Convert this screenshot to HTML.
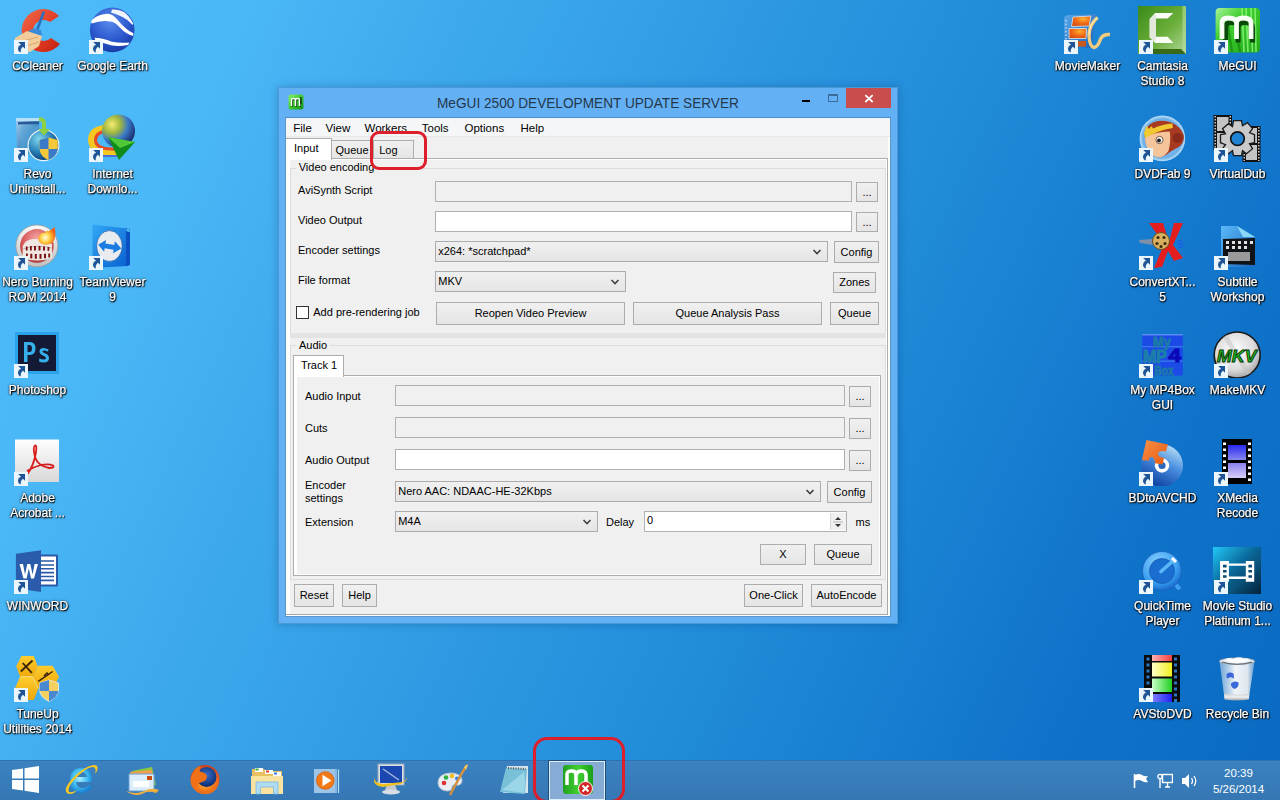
<!DOCTYPE html><html><head><meta charset="utf-8"><style>
html,body{margin:0;padding:0;}
body{width:1280px;height:800px;overflow:hidden;position:relative;font-family:"Liberation Sans",sans-serif;
background:linear-gradient(115deg,#4dbbf9 0%,#4ab7f6 15%,#3ca8ec 30%,#1f8ad8 63%,#0f72c9 85%,#0a6ac2 100%);}
.t{position:absolute;white-space:nowrap;}
.r{position:absolute;}
.lbl{position:absolute;width:75px;text-align:center;color:#fff;font-size:12px;line-height:15px;text-shadow:0 0 1px #000,0 1px 2px #000,1px 1px 1px #000,0 0 3px rgba(0,0,0,.5);will-change:transform;-webkit-text-stroke:0.25px #fff;}
</style></head><body>

<div class="r" style="left:278px;top:87px;width:620px;height:537px;background:#64b0f5;border:1px solid #4a98d8;box-sizing:border-box;box-shadow:0 0 8px rgba(0,30,80,0.25);"></div>
<svg class="r" style="left:288px;top:94px" width="16" height="16" viewBox="0 0 16 16"><defs><linearGradient id="tig" x1="0" y1="0" x2="1" y2="1"><stop offset="0" stop-color="#8af070"/><stop offset="0.5" stop-color="#3cc830"/><stop offset="1" stop-color="#1a9018"/></linearGradient></defs><rect x="0.5" y="0.5" width="15" height="15" rx="2.5" fill="url(#tig)"/><path d="M3.5 12 V6 Q3.5 4.5 5.5 4.5 Q7.5 4.5 7.5 6 V12 M7.5 6 Q7.5 4.5 9.5 4.5 Q11.5 4.5 11.5 6 V12" stroke="#0a3a0a" stroke-width="1.6" fill="none" transform="translate(0.8,0.8)"/><path d="M3.5 12 V6 Q3.5 4.5 5.5 4.5 Q7.5 4.5 7.5 6 V12 M7.5 6 Q7.5 4.5 9.5 4.5 Q11.5 4.5 11.5 6 V12" stroke="#f4fff0" stroke-width="1.5" fill="none"/><path d="M13 3 V10" stroke="#0a3a0a" stroke-width="1.3"/></svg>
<div class="t" style="left:436.6px;top:93.60px;font-size:15px;line-height:18px;color:#24384a;transform:scaleX(0.91);transform-origin:0 0;">MeGUI 2500 DEVELOPMENT UPDATE SERVER</div>
<div class="r" style="left:802px;top:100px;width:8px;height:2px;background:#000;"></div>
<div class="r" style="left:828px;top:94px;width:10px;height:8px;border:1px solid #3a6c9c;border-top-width:2px;box-sizing:border-box;"></div>
<div class="r" style="left:846px;top:88px;width:45px;height:20px;background:#c94d4d;"></div>
<svg class="r" style="left:861px;top:90px" width="16" height="16"><path d="M4.3 5.2 L11.7 12 M11.7 5.2 L4.3 12" stroke="#fff" stroke-width="1.7"/></svg>
<div class="r" style="left:285px;top:117px;width:606px;height:500px;background:#f0f0f0;border:1px solid #5f96c8;box-sizing:border-box;"></div>
<div class="r" style="left:286px;top:117px;width:605px;height:1px;background:#4a90d0;"></div>
<div class="r" style="left:286px;top:118px;width:604px;height:1px;background:#e6f5fc;"></div>
<div class="r" style="left:286px;top:119px;width:604px;height:17px;background:#f5f6f7;"></div>
<div class="r" style="left:286px;top:136px;width:604px;height:1px;background:#e8e8e8;"></div>
<div class="t" style="left:293.25px;top:121.02px;font-size:11.5px;line-height:14px;color:#000;">File</div>
<div class="t" style="left:325.5px;top:121.02px;font-size:11.5px;line-height:14px;color:#000;">View</div>
<div class="t" style="left:364.5px;top:121.02px;font-size:11.5px;line-height:14px;color:#000;">Workers</div>
<div class="t" style="left:421.75px;top:121.02px;font-size:11.5px;line-height:14px;color:#000;">Tools</div>
<div class="t" style="left:464.5px;top:121.02px;font-size:11.5px;line-height:14px;color:#000;">Options</div>
<div class="t" style="left:520.5px;top:121.02px;font-size:11.5px;line-height:14px;color:#000;">Help</div>
<div class="r" style="left:286px;top:158px;width:602px;height:423px;border:1px solid #adadad;border-left:none;border-bottom:none;box-sizing:border-box;background:#f0f0f0;"></div>
<div class="r" style="left:286px;top:159px;width:601px;height:421px;border:1px solid #fff;border-left-width:4px;box-sizing:border-box;"></div>
<div class="r" style="left:331px;top:140px;width:43px;height:19px;border:1px solid #adadad;box-sizing:border-box;background:linear-gradient(#f0f0f0,#e5e5e5);"></div>
<div class="r" style="left:373px;top:140px;width:41px;height:19px;border:1px solid #adadad;box-sizing:border-box;background:linear-gradient(#f0f0f0,#e5e5e5);"></div>
<div class="r" style="left:286px;top:138px;width:46px;height:22px;border:1px solid #adadad;border-left:none;border-bottom:none;box-sizing:border-box;background:#fff;"></div>
<div class="t" style="left:294px;top:141.69px;font-size:11px;line-height:13px;color:#000;">Input</div>
<div class="t" style="left:335.5px;top:143.94px;font-size:11px;line-height:13px;color:#000;">Queue</div>
<div class="t" style="left:379.25px;top:143.69px;font-size:11px;line-height:13px;color:#000;">Log</div>
<div class="r" style="left:290px;top:168px;width:596px;height:166px;border:1px solid #dcdcdc;box-sizing:border-box;"></div>
<div class="r" style="left:296px;top:162px;width:76px;height:10px;background:#f0f0f0;"></div>
<div class="t" style="left:298.7px;top:160.89px;font-size:11px;line-height:13px;color:#000;">Video encoding</div>
<div class="t" style="left:298px;top:184.19px;font-size:11px;line-height:13px;color:#000;">AviSynth Script</div>
<div class="t" style="left:298px;top:214.19px;font-size:11px;line-height:13px;color:#000;">Video Output</div>
<div class="t" style="left:298px;top:244.19px;font-size:11px;line-height:13px;color:#000;">Encoder settings</div>
<div class="t" style="left:298px;top:274.19px;font-size:11px;line-height:13px;color:#000;">File format</div>
<div class="r" style="left:435px;top:181px;width:417px;height:21px;border:1px solid #b0b0b0;box-sizing:border-box;background:#f0f0f0;"></div>
<div class="r" style="left:856px;top:182px;width:22px;height:20px;border:1px solid #acacac;box-sizing:border-box;background:linear-gradient(#f0f0f0,#e5e5e5);"></div>
<div class="t" style="left:856px;top:185.70px;width:22px;text-align:center;font-size:11px;line-height:13px;color:#000">...</div>
<div class="r" style="left:435px;top:211px;width:417px;height:21px;border:1px solid #b0b0b0;box-sizing:border-box;background:#fff;"></div>
<div class="r" style="left:856px;top:212px;width:22px;height:20px;border:1px solid #acacac;box-sizing:border-box;background:linear-gradient(#f0f0f0,#e5e5e5);"></div>
<div class="t" style="left:856px;top:215.70px;width:22px;text-align:center;font-size:11px;line-height:13px;color:#000">...</div>
<div class="r" style="left:435px;top:241px;width:393px;height:21px;border:1px solid #acacac;box-sizing:border-box;background:linear-gradient(#f0f0f0,#e5e5e5);"></div>
<div class="t" style="left:438.25px;top:245.19px;font-size:11px;line-height:13px;color:#000;">x264: *scratchpad*</div>
<svg class="r" style="left:812px;top:247.5px" width="10" height="8"><path d="M1.5 2 L5 5.5 L8.5 2" stroke="#404040" stroke-width="1.6" fill="none"/></svg>
<div class="r" style="left:834px;top:241px;width:45px;height:22px;border:1px solid #acacac;box-sizing:border-box;background:linear-gradient(#f0f0f0,#e5e5e5);"></div>
<div class="t" style="left:834px;top:245.70px;width:45px;text-align:center;font-size:11px;line-height:13px;color:#000">Config</div>
<div class="r" style="left:435px;top:271px;width:191px;height:21px;border:1px solid #acacac;box-sizing:border-box;background:linear-gradient(#f0f0f0,#e5e5e5);"></div>
<div class="t" style="left:438.25px;top:275.19px;font-size:11px;line-height:13px;color:#000;">MKV</div>
<svg class="r" style="left:610px;top:277.5px" width="10" height="8"><path d="M1.5 2 L5 5.5 L8.5 2" stroke="#404040" stroke-width="1.6" fill="none"/></svg>
<div class="r" style="left:833px;top:272px;width:43px;height:21px;border:1px solid #acacac;box-sizing:border-box;background:linear-gradient(#f0f0f0,#e5e5e5);"></div>
<div class="t" style="left:833px;top:276.20px;width:43px;text-align:center;font-size:11px;line-height:13px;color:#000">Zones</div>
<div class="r" style="left:296px;top:306px;width:13px;height:13px;border:1px solid #333;background:#fff;box-sizing:border-box;"></div>
<div class="t" style="left:313.25px;top:305.69px;font-size:11px;line-height:13px;color:#000;">Add pre-rendering job</div>
<div class="r" style="left:436px;top:302px;width:189px;height:23px;border:1px solid #acacac;box-sizing:border-box;background:linear-gradient(#f0f0f0,#e5e5e5);"></div>
<div class="t" style="left:436px;top:307.20px;width:189px;text-align:center;font-size:11px;line-height:13px;color:#000">Reopen Video Preview</div>
<div class="r" style="left:633px;top:302px;width:189px;height:23px;border:1px solid #acacac;box-sizing:border-box;background:linear-gradient(#f0f0f0,#e5e5e5);"></div>
<div class="t" style="left:633px;top:307.20px;width:189px;text-align:center;font-size:11px;line-height:13px;color:#000">Queue Analysis Pass</div>
<div class="r" style="left:830px;top:302px;width:49px;height:23px;border:1px solid #acacac;box-sizing:border-box;background:linear-gradient(#f0f0f0,#e5e5e5);"></div>
<div class="t" style="left:830px;top:307.20px;width:49px;text-align:center;font-size:11px;line-height:13px;color:#000">Queue</div>
<div class="r" style="left:290px;top:333px;width:596px;height:5px;background:#e3e3e3;"></div>
<div class="r" style="left:290px;top:345px;width:596px;height:235px;border:1px solid #dcdcdc;box-sizing:border-box;"></div>
<div class="r" style="left:296px;top:340px;width:34px;height:10px;background:#f0f0f0;"></div>
<div class="t" style="left:299px;top:339.19px;font-size:11px;line-height:13px;color:#000;">Audio</div>
<div class="r" style="left:293px;top:375px;width:588px;height:201px;border:1px solid #adadad;box-sizing:border-box;background:#f0f0f0;"></div>
<div class="r" style="left:294px;top:376px;width:586px;height:199px;border:1px solid #fff;border-left-width:3px;box-sizing:border-box;"></div>
<div class="r" style="left:293px;top:355px;width:51px;height:22px;border:1px solid #adadad;border-bottom:none;box-sizing:border-box;background:#fff;"></div>
<div class="t" style="left:300.9px;top:359.09px;font-size:11px;line-height:13px;color:#000;">Track 1</div>
<div class="t" style="left:305px;top:389.69px;font-size:11px;line-height:13px;color:#000;">Audio Input</div>
<div class="t" style="left:305px;top:421.69px;font-size:11px;line-height:13px;color:#000;">Cuts</div>
<div class="t" style="left:305px;top:453.69px;font-size:11px;line-height:13px;color:#000;">Audio Output</div>
<div class="r" style="left:395px;top:385px;width:450px;height:21px;border:1px solid #b0b0b0;box-sizing:border-box;background:#f0f0f0;"></div>
<div class="r" style="left:849px;top:386px;width:22px;height:21px;border:1px solid #acacac;box-sizing:border-box;background:linear-gradient(#f0f0f0,#e5e5e5);"></div>
<div class="t" style="left:849px;top:390.20px;width:22px;text-align:center;font-size:11px;line-height:13px;color:#000">...</div>
<div class="r" style="left:395px;top:417px;width:450px;height:21px;border:1px solid #b0b0b0;box-sizing:border-box;background:#f0f0f0;"></div>
<div class="r" style="left:849px;top:418px;width:22px;height:21px;border:1px solid #acacac;box-sizing:border-box;background:linear-gradient(#f0f0f0,#e5e5e5);"></div>
<div class="t" style="left:849px;top:422.20px;width:22px;text-align:center;font-size:11px;line-height:13px;color:#000">...</div>
<div class="r" style="left:395px;top:449px;width:450px;height:21px;border:1px solid #b0b0b0;box-sizing:border-box;background:#fff;"></div>
<div class="r" style="left:849px;top:450px;width:22px;height:21px;border:1px solid #acacac;box-sizing:border-box;background:linear-gradient(#f0f0f0,#e5e5e5);"></div>
<div class="t" style="left:849px;top:454.20px;width:22px;text-align:center;font-size:11px;line-height:13px;color:#000">...</div>
<div class="t" style="left:305px;top:479.19px;font-size:11px;line-height:13px;color:#000;">Encoder</div>
<div class="t" style="left:305px;top:492.19px;font-size:11px;line-height:13px;color:#000;">settings</div>
<div class="r" style="left:395px;top:481px;width:426px;height:21px;border:1px solid #acacac;box-sizing:border-box;background:linear-gradient(#f0f0f0,#e5e5e5);"></div>
<div class="t" style="left:398.2px;top:485.19px;font-size:11px;line-height:13px;color:#000;">Nero AAC: NDAAC-HE-32Kbps</div>
<svg class="r" style="left:805px;top:487.5px" width="10" height="8"><path d="M1.5 2 L5 5.5 L8.5 2" stroke="#404040" stroke-width="1.6" fill="none"/></svg>
<div class="r" style="left:827px;top:481px;width:45px;height:22px;border:1px solid #acacac;box-sizing:border-box;background:linear-gradient(#f0f0f0,#e5e5e5);"></div>
<div class="t" style="left:827px;top:485.70px;width:45px;text-align:center;font-size:11px;line-height:13px;color:#000">Config</div>
<div class="t" style="left:305px;top:516.19px;font-size:11px;line-height:13px;color:#000;">Extension</div>
<div class="r" style="left:395px;top:511px;width:203px;height:21px;border:1px solid #acacac;box-sizing:border-box;background:linear-gradient(#f0f0f0,#e5e5e5);"></div>
<div class="t" style="left:398.2px;top:515.19px;font-size:11px;line-height:13px;color:#000;">M4A</div>
<svg class="r" style="left:582px;top:517.5px" width="10" height="8"><path d="M1.5 2 L5 5.5 L8.5 2" stroke="#404040" stroke-width="1.6" fill="none"/></svg>
<div class="t" style="left:606px;top:516.19px;font-size:11px;line-height:13px;color:#000;">Delay</div>
<div class="r" style="left:644px;top:511px;width:203px;height:21px;border:1px solid #b0b0b0;box-sizing:border-box;background:#fff;"></div>
<div class="t" style="left:647px;top:513.69px;font-size:11px;line-height:13px;color:#000;">0</div>
<div class="r" style="left:830px;top:513px;width:15px;height:17px;background:#f0f0f0;border-left:1px solid #d8d8d8;"></div>
<svg class="r" style="left:832px;top:514px" width="12" height="16"><path d="M3 6 L6 3 L9 6Z M3 10 L6 13 L9 10Z" fill="#333"/><path d="M1 8 H11" stroke="#b8b8b8" stroke-width="1"/></svg>
<div class="t" style="left:855.5px;top:516.19px;font-size:11px;line-height:13px;color:#000;">ms</div>
<div class="r" style="left:760px;top:544px;width:46px;height:21px;border:1px solid #acacac;box-sizing:border-box;background:linear-gradient(#f0f0f0,#e5e5e5);"></div>
<div class="t" style="left:760px;top:548.20px;width:46px;text-align:center;font-size:11px;line-height:13px;color:#000">X</div>
<div class="r" style="left:814px;top:544px;width:58px;height:21px;border:1px solid #acacac;box-sizing:border-box;background:linear-gradient(#f0f0f0,#e5e5e5);"></div>
<div class="t" style="left:814px;top:548.20px;width:58px;text-align:center;font-size:11px;line-height:13px;color:#000">Queue</div>
<div class="r" style="left:286px;top:580px;width:4px;height:35px;background:#fff;"></div>
<div class="r" style="left:887px;top:580px;width:1px;height:35px;background:#a8a8a8;"></div>
<div class="r" style="left:888px;top:137px;width:2px;height:479px;background:#fff;"></div>
<div class="r" style="left:286px;top:614px;width:602px;height:1px;background:#a8a8a8;"></div>
<div class="r" style="left:286px;top:615px;width:604px;height:1px;background:#fff;"></div>
<div class="r" style="left:294px;top:584px;width:40px;height:23px;border:1px solid #acacac;box-sizing:border-box;background:linear-gradient(#f0f0f0,#e5e5e5);"></div>
<div class="t" style="left:294px;top:589.20px;width:40px;text-align:center;font-size:11px;line-height:13px;color:#000">Reset</div>
<div class="r" style="left:342px;top:584px;width:35px;height:23px;border:1px solid #acacac;box-sizing:border-box;background:linear-gradient(#f0f0f0,#e5e5e5);"></div>
<div class="t" style="left:342px;top:589.20px;width:35px;text-align:center;font-size:11px;line-height:13px;color:#000">Help</div>
<div class="r" style="left:744px;top:584px;width:59px;height:23px;border:1px solid #acacac;box-sizing:border-box;background:linear-gradient(#f0f0f0,#e5e5e5);"></div>
<div class="t" style="left:744px;top:589.20px;width:59px;text-align:center;font-size:11px;line-height:13px;color:#000">One-Click</div>
<div class="r" style="left:811px;top:584px;width:71px;height:23px;border:1px solid #acacac;box-sizing:border-box;background:linear-gradient(#f0f0f0,#e5e5e5);"></div>
<div class="t" style="left:811px;top:589.20px;width:71px;text-align:center;font-size:11px;line-height:13px;color:#000">AutoEncode</div>
<div class="r" style="left:370px;top:131px;width:51px;height:33px;border:3px solid #dc1f2b;border-radius:9px;"></div>
<svg class="r" style="left:13px;top:6px" width="48" height="48" viewBox="0 0 48 48">
<defs><linearGradient id="ccR" x1="0" y1="0" x2="1" y2="1"><stop offset="0" stop-color="#f06a4a"/><stop offset="0.6" stop-color="#e03a22"/><stop offset="1" stop-color="#c02010"/></linearGradient></defs>
<path d="M46 10 A21.5 21.5 0 1 0 47 38 L38 32 A10.5 10.5 0 1 1 37 16 Z" fill="url(#ccR)"/>
<path d="M30.5 6.5 L24.5 23" stroke="#2a70c0" stroke-width="2.6" stroke-linecap="round"/>
<path d="M15 26 Q20 20 28 24 L29 30 Z" fill="#3a8ad8"/>
<path d="M14 25 L29 30 L26 40 L17 46 Q8 44 4 38 Q1 34 2 32 Z" fill="#f2cc9a"/>
<path d="M6 36 L25 31 M10 41 L26 36" stroke="#d8a870" stroke-width="1"/>
</svg>
<svg class="r" style="left:14px;top:40px" width="14" height="14" viewBox="0 0 14 14"><rect x="0" y="0" width="14" height="14" fill="#eaf6fc"/><path d="M4.2 2 L11 2 L11 8.8 L8.9 6.7 Q6.2 8.8 6.8 12.6 Q4 11.6 4 8.6 Q4.2 5.6 7 4.8 Z" fill="#1f5596"/></svg>
<div class="lbl" style="left:0.0px;top:59.3px">CCleaner</div>
<svg class="r" style="left:88px;top:6px" width="48" height="48" viewBox="0 0 48 48">
<defs><radialGradient id="geG" cx="0.45" cy="0.3" r="0.75"><stop offset="0" stop-color="#5a8aee"/><stop offset="0.6" stop-color="#2a56cc"/><stop offset="1" stop-color="#1838a0"/></radialGradient></defs>
<circle cx="24.2" cy="23.9" r="22.3" fill="url(#geG)"/>
<path d="M3.2 14.9 Q8 8.5 19.5 7.75 Q25 8 29.2 13.6 Q34 19.5 38.3 22.7 Q41.5 25.5 45.5 27.3 L45 30 Q38 28 31.8 21.4 Q27 16 22.7 15.5 Q14 13.6 3.5 17.5 Z" fill="#fff"/>
<path d="M24 3.6 Q31 3 36 6 Q41 9.5 45.2 17.5 L44.5 19 Q40 13.5 34.4 11 Q29 8 23 6.5 Z" fill="#f0f4fc"/>
<path d="M6.5 31.8 Q14 32 24 35.7 Q33 37.5 41.5 36.4 L40 39 Q32 40.5 24 39.6 Q15 37 7.5 34.5 Z" fill="#fff"/>
</svg>
<svg class="r" style="left:89px;top:40px" width="14" height="14" viewBox="0 0 14 14"><rect x="0" y="0" width="14" height="14" fill="#eaf6fc"/><path d="M4.2 2 L11 2 L11 8.8 L8.9 6.7 Q6.2 8.8 6.8 12.6 Q4 11.6 4 8.6 Q4.2 5.6 7 4.8 Z" fill="#1f5596"/></svg>
<div class="lbl" style="left:75.0px;top:59.3px">Google Earth</div>
<svg class="r" style="left:13px;top:114px" width="48" height="48" viewBox="0 0 48 48">
<defs><linearGradient id="rvB" x1="0" y1="0" x2="1" y2="1"><stop offset="0" stop-color="#a8d0f0"/><stop offset="0.5" stop-color="#4a90c8"/><stop offset="1" stop-color="#1a70a8"/></linearGradient>
<radialGradient id="rvG" cx="0.35" cy="0.3" r="0.75"><stop offset="0" stop-color="#80d8f0"/><stop offset="0.55" stop-color="#2a80b8"/><stop offset="1" stop-color="#0a3a70"/></radialGradient></defs>
<path d="M3 4 L26 4 L27 40 L4 40 Z" fill="url(#rvB)"/>
<path d="M3 4 L26 4 L26 7 L3 7Z" fill="#b8e0f8"/>
<path d="M5 8 L26 7.5 L26 10 L5 10.5Z" fill="#2a5a98"/>
<path d="M8 12 L26 11.5 L26 40 L8 40Z" fill="#5aa8d8" opacity="0.5"/>
<circle cx="30.5" cy="31.2" r="15.4" fill="url(#rvG)" stroke="#e8f2f8" stroke-width="1.2"/>
<path d="M26.6 26 L35.5 23.4 L44.8 26 L44.8 35 Q43.5 43 35.5 46 Q27.5 43 26.6 35 Z" fill="#f4c838"/>
<path d="M26.6 26 L35.5 23.4 L35.5 35 L26.6 35 Z M35.5 35 L44.8 35 Q43.5 43 35.5 46 Z" fill="#3a7ac8"/>
<path d="M26 3 Q33 3 33 10 L33 15 L37 15 L31 21.5 L25 15 L29 15 L29 10 Q29 7 26 7 Z" fill="#8ed040"/>
</svg>
<svg class="r" style="left:14px;top:148px" width="14" height="14" viewBox="0 0 14 14"><rect x="0" y="0" width="14" height="14" fill="#eaf6fc"/><path d="M4.2 2 L11 2 L11 8.8 L8.9 6.7 Q6.2 8.8 6.8 12.6 Q4 11.6 4 8.6 Q4.2 5.6 7 4.8 Z" fill="#1f5596"/></svg>
<div class="lbl" style="left:0.0px;top:167.3px">Revo</div>
<div class="lbl" style="left:0.0px;top:182.3px">Uninstall...</div>
<svg class="r" style="left:88px;top:114px" width="48" height="48" viewBox="0 0 48 48">
<defs><radialGradient id="idG" cx="0.3" cy="0.3" r="0.75"><stop offset="0" stop-color="#f4ec70"/><stop offset="0.35" stop-color="#a0b840"/><stop offset="0.65" stop-color="#3a78c8"/><stop offset="1" stop-color="#1a3070"/></radialGradient></defs>
<path d="M16 11 Q0 13 0 26 Q1 39 16 41 L30 41 L30 37 L17 36 Q6 34 6 26 Q7 17 17 16 Z" fill="#f4c820"/>
<path d="M16 13.5 Q2.5 15.5 2.5 26 Q3.5 37 16 38.5 L30 39 L30 37 L17 36 Q6 34 6 26 Q7 17 17 16 Z" fill="#f4c820"/>
<path d="M17 16 Q6 17 6 26 Q6 34 17 36 L30 37 L30 34 L17 33 Q9 31 9 26 Q10 19 18 19 Z" fill="#e84a22"/>
<path d="M17 19 Q9 20 9 26 Q9 31 17 33 L30 34 L30 32 L17 31 Q11 30 11 26 Q12 21 18 21 Z" fill="none"/>
<path d="M4 33 Q8 40 16 41 L30 41 L30 43 L15 43 Q6 41 4 33Z" fill="#4a70d8"/>
<circle cx="30.5" cy="17" r="16.5" fill="url(#idG)"/>
<path d="M20 23 L47 28 L31 46 Z" fill="#108a18"/>
<path d="M20 23 L47 28 L32 34 Z" fill="#50c838"/>
</svg>
<svg class="r" style="left:89px;top:148px" width="14" height="14" viewBox="0 0 14 14"><rect x="0" y="0" width="14" height="14" fill="#eaf6fc"/><path d="M4.2 2 L11 2 L11 8.8 L8.9 6.7 Q6.2 8.8 6.8 12.6 Q4 11.6 4 8.6 Q4.2 5.6 7 4.8 Z" fill="#1f5596"/></svg>
<div class="lbl" style="left:75.0px;top:167.3px">Internet</div>
<div class="lbl" style="left:75.0px;top:182.3px">Downlo...</div>
<svg class="r" style="left:13px;top:222px" width="48" height="48" viewBox="0 0 48 48">
<defs><radialGradient id="neG" cx="0.5" cy="0.3" r="0.7"><stop offset="0" stop-color="#f4a8a8"/><stop offset="0.6" stop-color="#d85a5a"/><stop offset="1" stop-color="#b03838"/></radialGradient>
<linearGradient id="neS" x1="0" y1="0" x2="0" y2="1"><stop offset="0" stop-color="#f8f8f8"/><stop offset="1" stop-color="#c0c0c0"/></linearGradient>
<radialGradient id="neF" cx="0.4" cy="0.6" r="0.6"><stop offset="0" stop-color="#fffce0"/><stop offset="0.45" stop-color="#ffd040"/><stop offset="1" stop-color="#f06010"/></radialGradient></defs>
<circle cx="23.9" cy="23.9" r="21" fill="url(#neS)" stroke="#9a9a9a" stroke-width="0.8"/>
<circle cx="23.9" cy="23.9" r="16.8" fill="url(#neG)"/>
<path d="M9.7 24 Q12 18 20 17 Q30 17 39 22 L39 36 Q24 41 9.7 36 Z" fill="#f0e6e2"/>
<path d="M10 27 Q24 22 39 26" stroke="#b8a8a8" stroke-width="0.8" fill="none"/>
<path d="M12.8 24.5h1.8v4h-1.8zM17 24h1.8v4.5h-1.8zM21 24h2v4.5h-2zM25.5 24h2v4.5h-2zM30 24.5h2v4h-2zM34.5 25h1.8v3.8h-1.8zM13 31.5h1.8v4.5h-1.8zM17.3 31.8h2v4.8h-2zM21.8 32h2v4.8h-2zM26.5 32h2v4.8h-2zM31 31.8h2v4.5h-2zM35.3 31.5h1.8v4h-1.8z" fill="#7a1010"/>
<path d="M41.5 5 Q44 14 40 20 Q36 24 29 22 Q24 19 26 14 Q28 10 32 11 Q33 8 36 9 Q38 8 41.5 5Z" fill="url(#neF)"/>
</svg>
<svg class="r" style="left:14px;top:256px" width="14" height="14" viewBox="0 0 14 14"><rect x="0" y="0" width="14" height="14" fill="#eaf6fc"/><path d="M4.2 2 L11 2 L11 8.8 L8.9 6.7 Q6.2 8.8 6.8 12.6 Q4 11.6 4 8.6 Q4.2 5.6 7 4.8 Z" fill="#1f5596"/></svg>
<div class="lbl" style="left:0.0px;top:275.3px">Nero Burning</div>
<div class="lbl" style="left:0.0px;top:290.3px">ROM 2014</div>
<svg class="r" style="left:88px;top:222px" width="48" height="48" viewBox="0 0 48 48">
<defs><linearGradient id="tvB" x1="0" y1="0" x2="1" y2="1"><stop offset="0" stop-color="#30a8f4"/><stop offset="1" stop-color="#0a60d0"/></linearGradient></defs>
<path d="M4.5 2.5 L39.5 6.5 L39.5 44 L4.5 46 Z" fill="url(#tvB)"/>
<path d="M38 6.3 L42 8 L42 43 L38 44.2Z" fill="#0a50c0"/>
<path d="M38.5 7 L41.5 8.3 L41.5 10 L38.5 9Z" fill="#60e0f8"/>
<ellipse cx="21.4" cy="24" rx="12.8" ry="15.4" fill="#e8ecf0" stroke="#0a4a9a" stroke-width="0.6"/>
<g transform="rotate(9 21.8 24.6)"><path d="M10 24.6 L17 18.6 L17 22.2 L26 22.2 L26 18.6 L33.5 24.6 L26 30.6 L26 27 L17 27 L17 30.6 Z" fill="#1a7ce0"/></g>
</svg>
<svg class="r" style="left:89px;top:256px" width="14" height="14" viewBox="0 0 14 14"><rect x="0" y="0" width="14" height="14" fill="#eaf6fc"/><path d="M4.2 2 L11 2 L11 8.8 L8.9 6.7 Q6.2 8.8 6.8 12.6 Q4 11.6 4 8.6 Q4.2 5.6 7 4.8 Z" fill="#1f5596"/></svg>
<div class="lbl" style="left:75.0px;top:275.3px">TeamViewer</div>
<div class="lbl" style="left:75.0px;top:290.3px">9</div>
<svg class="r" style="left:13px;top:330px" width="48" height="48" viewBox="0 0 48 48">
<rect x="2" y="2" width="44" height="42" fill="#2aa2ea"/>
<rect x="5" y="5" width="38" height="36" fill="#141a35"/>
<path d="M11 12 L11 32 L14.5 32 L14.5 25 L17 25 Q22.5 25 22.5 18.5 Q22.5 12 17 12 Z M14.5 15 L16.5 15 Q19 15 19 18.5 Q19 22 16.5 22 L14.5 22 Z" fill="#36b0ea" fill-rule="evenodd"/>
<path d="M35.5 19.5 Q33 18 30.5 18 Q26.5 18 26.5 21.5 Q26.5 24 30 25.5 Q33 26.5 33 28 Q33 29.5 30.5 29.5 Q28 29.5 26.5 28.3 L26 31.5 Q28 32.5 30.5 32.5 Q36 32.5 36 28 Q36 25 32.5 23.5 Q29.5 22.5 29.5 21.3 Q29.5 20.5 31 20.5 Q33 20.5 35 21.8 Z" fill="#36b0ea"/>
</svg>
<svg class="r" style="left:14px;top:364px" width="14" height="14" viewBox="0 0 14 14"><rect x="0" y="0" width="14" height="14" fill="#eaf6fc"/><path d="M4.2 2 L11 2 L11 8.8 L8.9 6.7 Q6.2 8.8 6.8 12.6 Q4 11.6 4 8.6 Q4.2 5.6 7 4.8 Z" fill="#1f5596"/></svg>
<div class="lbl" style="left:0.0px;top:383.3px">Photoshop</div>
<svg class="r" style="left:13px;top:438px" width="48" height="48" viewBox="0 0 48 48">
<defs><linearGradient id="acB" x1="0" y1="0" x2="0" y2="1"><stop offset="0" stop-color="#ffffff"/><stop offset="1" stop-color="#d8d8d8"/></linearGradient></defs>
<rect x="2" y="1.5" width="44" height="42.5" fill="url(#acB)"/>
<path d="M14.5 36 Q21 27 23 14 Q24 7 22 7.5 Q19.5 9 22 19 Q25 28 36 30 Q42 30 40 27.5 Q36 25.5 28 27 Q20 29 14 33" stroke="#d81c1c" stroke-width="1.8" fill="none"/>
</svg>
<svg class="r" style="left:14px;top:472px" width="14" height="14" viewBox="0 0 14 14"><rect x="0" y="0" width="14" height="14" fill="#eaf6fc"/><path d="M4.2 2 L11 2 L11 8.8 L8.9 6.7 Q6.2 8.8 6.8 12.6 Q4 11.6 4 8.6 Q4.2 5.6 7 4.8 Z" fill="#1f5596"/></svg>
<div class="lbl" style="left:0.0px;top:491.3px">Adobe</div>
<div class="lbl" style="left:0.0px;top:506.3px">Acrobat ...</div>
<svg class="r" style="left:13px;top:546px" width="48" height="48" viewBox="0 0 48 48">
<rect x="24" y="8.5" width="21" height="32" rx="1" fill="#2b5aa8"/>
<rect x="26" y="10.5" width="17" height="28" fill="#fff"/>
<path d="M26 15h15M26 19h15M26 22.8h15M26 26.6h15M26 30.5h15M26 34.4h15" stroke="#2b5aa8" stroke-width="1.6"/>
<path d="M2.9 7.8 L28 4.2 L28 46 L2.9 42.2 Z" fill="#2b5cab"/>
<path d="M6.5 18 L10 18 L12 28.5 L14.3 18 L17.3 18 L19.6 28.5 L21.6 18 L25 18 L21 32.5 L18 32.5 L15.8 22.5 L13.6 32.5 L10.5 32.5 Z" fill="#fff"/>
</svg>
<svg class="r" style="left:14px;top:580px" width="14" height="14" viewBox="0 0 14 14"><rect x="0" y="0" width="14" height="14" fill="#eaf6fc"/><path d="M4.2 2 L11 2 L11 8.8 L8.9 6.7 Q6.2 8.8 6.8 12.6 Q4 11.6 4 8.6 Q4.2 5.6 7 4.8 Z" fill="#1f5596"/></svg>
<div class="lbl" style="left:0.0px;top:599.3px">WINWORD</div>
<svg class="r" style="left:13px;top:654px" width="48" height="48" viewBox="0 0 48 48">
<defs><linearGradient id="tuY" x1="0" y1="0" x2="0" y2="1"><stop offset="0" stop-color="#ffcc30"/><stop offset="1" stop-color="#f0a808"/></linearGradient></defs>
<path d="M8.4 1.9 L20.8 1.9 L24.7 12.3 L19.5 22.7 L7.1 22.7 L3.2 12.3 Z" fill="url(#tuY)"/>
<path d="M25 11.7 L39.6 11.7 L46 22.7 L40 34.4 L25.3 34.4 L19.5 22.7 Z" fill="url(#tuY)"/>
<path d="M7 22.7 L19.5 22.7 L25.3 34.4 L20.8 46 L7 46 L1.9 34.4 Z" fill="url(#tuY)"/>
<path d="M19.5 22.7 L25.3 34.4 M7.1 22.7 L19.5 22.7" stroke="#ffe890" stroke-width="0.8"/>
<path d="M7.8 17.5 L19.5 6.5 M9.7 9 L18.8 18.8" stroke="#3a2408" stroke-width="1.8"/>
<path d="M25.3 27.3 L39.6 17.5 M31 22 L34 19 L36 21" stroke="#3a2408" stroke-width="1.5" fill="none"/>
<path d="M26.6 29 L36 26 L45.5 29 L45.5 37 Q44 44 36 47.4 Q28 44 26.6 37Z" fill="#f4d060" stroke="#e8f0f8" stroke-width="0.8"/>
<path d="M26.6 29 L36 26 L36 37 L26.6 37Z M36 37 L45.5 37 Q44 44 36 47.4Z" fill="#4a88d0"/>
</svg>
<svg class="r" style="left:14px;top:688px" width="14" height="14" viewBox="0 0 14 14"><rect x="0" y="0" width="14" height="14" fill="#eaf6fc"/><path d="M4.2 2 L11 2 L11 8.8 L8.9 6.7 Q6.2 8.8 6.8 12.6 Q4 11.6 4 8.6 Q4.2 5.6 7 4.8 Z" fill="#1f5596"/></svg>
<div class="lbl" style="left:0.0px;top:707.3px">TuneUp</div>
<div class="lbl" style="left:0.0px;top:722.3px">Utilities 2014</div>
<svg class="r" style="left:1063px;top:6px" width="48" height="48" viewBox="0 0 48 48">
<defs><linearGradient id="mmB" x1="0" y1="0" x2="1" y2="1"><stop offset="0" stop-color="#5aa8e8"/><stop offset="1" stop-color="#1a60b8"/></linearGradient>
<radialGradient id="mmO" cx="0.6" cy="0.3" r="0.8"><stop offset="0" stop-color="#ffb030"/><stop offset="0.5" stop-color="#f06a18"/><stop offset="1" stop-color="#d04a10"/></radialGradient></defs>
<path d="M1 12 Q2 9 6 9 L34 8 Q30 25 29 42 L5 41 Q1 40 1 37 Z" fill="url(#mmB)"/>
<path d="M3 14v24" stroke="#a8d8f8" stroke-width="1.6" stroke-dasharray="1.6 2"/>
<path d="M10 11 L28 10 L26 20 L8.5 20.5 Z" fill="url(#mmO)" stroke="#d8ecf8" stroke-width="0.8"/>
<path d="M6 22.5 L23.5 22.5 L23 32.5 L6 32.5 Z" fill="url(#mmO)" stroke="#d8ecf8" stroke-width="0.8"/>
<path d="M15 35 L23 35 L23 40.5 L15 40.5 Z" fill="#c85a20"/>
<path d="M34.5 11.5 Q26 19 26 29 Q26.5 41 31 41.5 Q35 41 37.5 33 Q40 28 47 28.5" stroke="#f4cc80" stroke-width="3.4" fill="none"/>
<path d="M34.5 11.5 Q26 19 26 29" stroke="#fff0c0" stroke-width="1" fill="none"/>
</svg>
<svg class="r" style="left:1064px;top:40px" width="14" height="14" viewBox="0 0 14 14"><rect x="0" y="0" width="14" height="14" fill="#eaf6fc"/><path d="M4.2 2 L11 2 L11 8.8 L8.9 6.7 Q6.2 8.8 6.8 12.6 Q4 11.6 4 8.6 Q4.2 5.6 7 4.8 Z" fill="#1f5596"/></svg>
<div class="lbl" style="left:1050.0px;top:59.3px">MovieMaker</div>
<svg class="r" style="left:1138px;top:6px" width="48" height="48" viewBox="0 0 48 48">
<defs><linearGradient id="caG" x1="0" y1="0" x2="1" y2="1"><stop offset="0" stop-color="#3a8a1a"/><stop offset="0.55" stop-color="#6aae3a"/><stop offset="1" stop-color="#b0d898"/></linearGradient></defs>
<rect x="0" y="0" width="48" height="48" fill="url(#caG)"/>
<path d="M14.5 43 L43 43 L48 48 L14.5 48Z" fill="#3a6a18"/>
<path d="M44.5 0 L48 0 L48 48 L44.5 43Z" fill="#b8dca0" opacity="0.6"/>
<path d="M17.2 7 L35.4 7 L29.6 12.6 L17.9 12.6 L17.9 30.8 L29.6 30.8 L35.4 37 L17.2 37 L11.7 31.2 L11.7 13 Z" fill="#fafcf6"/>
<path d="M17.2 7 L17.9 12.6 L17.9 30.8 L17.2 37 L11.7 31.2 L11.7 13 Z" fill="#e2e8dc"/>
</svg>
<svg class="r" style="left:1139px;top:40px" width="14" height="14" viewBox="0 0 14 14"><rect x="0" y="0" width="14" height="14" fill="#eaf6fc"/><path d="M4.2 2 L11 2 L11 8.8 L8.9 6.7 Q6.2 8.8 6.8 12.6 Q4 11.6 4 8.6 Q4.2 5.6 7 4.8 Z" fill="#1f5596"/></svg>
<div class="lbl" style="left:1125.0px;top:59.3px">Camtasia</div>
<div class="lbl" style="left:1125.0px;top:74.3px">Studio 8</div>
<svg class="r" style="left:1213px;top:6px" width="48" height="48" viewBox="0 0 48 48">
<defs><linearGradient id="mgG" x1="0" y1="0" x2="1" y2="1"><stop offset="0" stop-color="#a8f498"/><stop offset="0.35" stop-color="#40d030"/><stop offset="1" stop-color="#20a818"/></linearGradient></defs>
<rect x="2.6" y="1.9" width="44.4" height="44.5" rx="4" fill="url(#mgG)"/>
<path d="M29 2 L31 46 M33 2 L35 46 M38 2 L39.5 46 M42 2 L43 46" stroke="#90f880" stroke-width="1.6" opacity="0.8"/>
<path d="M15 20 L19 46 M22 20 L27 46" stroke="#1a8a10" stroke-width="2.5" opacity="0.7"/>
<path d="M11 35 L11 20 Q11 15 16.5 15 Q23.5 15 23.5 20 L23.5 35 M23.5 20 Q23.5 15 30 15 Q38 15 38 20 L38 35" stroke="#0a4a08" stroke-width="5" fill="none" transform="translate(1.6,1.6)"/>
<path d="M9 33 L9 17 Q9 12 15 12 Q23.5 12 23.5 17 L23.5 33 M23.5 17 Q23.5 12 30 12 Q38 12 38 17 L38 33" stroke="#f8fff4" stroke-width="4.8" fill="none"/>
</svg>
<svg class="r" style="left:1214px;top:40px" width="14" height="14" viewBox="0 0 14 14"><rect x="0" y="0" width="14" height="14" fill="#eaf6fc"/><path d="M4.2 2 L11 2 L11 8.8 L8.9 6.7 Q6.2 8.8 6.8 12.6 Q4 11.6 4 8.6 Q4.2 5.6 7 4.8 Z" fill="#1f5596"/></svg>
<div class="lbl" style="left:1200.0px;top:59.3px">MeGUI</div>
<svg class="r" style="left:1138px;top:114px" width="48" height="48" viewBox="0 0 48 48">
<defs><radialGradient id="dfG" cx="0.5" cy="0.5" r="0.5"><stop offset="0" stop-color="#b0dcf8"/><stop offset="0.85" stop-color="#6ab0e8"/><stop offset="1" stop-color="#bfe0f8"/></radialGradient></defs>
<circle cx="24.4" cy="24.4" r="22.8" fill="url(#dfG)"/>
<path d="M6.5 19.5 Q10 8 20 7 Q30 6 38 11 Q46 17 46 24 Q45 32 37 35 L32 38 Q28 42 22 43.5 Q14 42 11 37 Q7 30 6.5 19.5Z" fill="#a83a22"/>
<path d="M7 23 Q16 18 31.8 17.5 Q33 28 30.5 37 Q27 42 22 43.5 Q15 43 11 37 Q7 31 7 23Z" fill="#f4c49a"/>
<path d="M6 19 L8.5 11.5 L11 15 L13.5 12 L15 14.5 Q25 10 34.4 9.5 L34.8 14 Q22 15.5 7 24 Z" fill="#f0c830"/>
<circle cx="21.5" cy="26" r="3.6" fill="#fff" stroke="#5a3a2a" stroke-width="0.8"/><circle cx="21" cy="26.5" r="2" fill="#222"/>
<circle cx="39.5" cy="24" r="5" fill="#8a2a18"/>
</svg>
<svg class="r" style="left:1139px;top:148px" width="14" height="14" viewBox="0 0 14 14"><rect x="0" y="0" width="14" height="14" fill="#eaf6fc"/><path d="M4.2 2 L11 2 L11 8.8 L8.9 6.7 Q6.2 8.8 6.8 12.6 Q4 11.6 4 8.6 Q4.2 5.6 7 4.8 Z" fill="#1f5596"/></svg>
<div class="lbl" style="left:1125.0px;top:167.3px">DVDFab 9</div>
<svg class="r" style="left:1213px;top:114px" width="48" height="48" viewBox="0 0 48 48">
<rect x="0.5" y="1" width="18.5" height="35" fill="#111"/>
<rect x="4" y="3" width="11.5" height="14" fill="#c4c4c4"/><rect x="4" y="19" width="11.5" height="15" fill="#c4c4c4"/>
<rect x="29.5" y="12" width="18" height="36" fill="#111"/>
<rect x="33" y="14" width="11" height="15" fill="#c4c4c4"/><rect x="33" y="31" width="11" height="15" fill="#c4c4c4"/>
<path d="M2.2 2v33M17.3 2v33M31.2 13v34M45.8 13v34" stroke="#e8e8e8" stroke-width="1.3" stroke-dasharray="1.5 1.5"/>
<g transform="translate(24.5,24.7)"><path d="M-4 -18 h8 l1 5 l5 -3 l5 6 l-3 4 l5 2 v8 l-5 1 l3 5 l-6 5 l-4 -3 l-1 5 h-8 l-1 -5 l-4 3 l-6 -5 l3 -4 l-5 -2 v-8 l5 -1 l-3 -5 l6 -5 l4 3 Z" fill="#cacaca" stroke="#1a1a1a" stroke-width="1.3"/><circle r="6.8" fill="#1f82d2" stroke="#111" stroke-width="1.6"/></g>
</svg>
<svg class="r" style="left:1214px;top:148px" width="14" height="14" viewBox="0 0 14 14"><rect x="0" y="0" width="14" height="14" fill="#eaf6fc"/><path d="M4.2 2 L11 2 L11 8.8 L8.9 6.7 Q6.2 8.8 6.8 12.6 Q4 11.6 4 8.6 Q4.2 5.6 7 4.8 Z" fill="#1f5596"/></svg>
<div class="lbl" style="left:1200.0px;top:167.3px">VirtualDub</div>
<svg class="r" style="left:1138px;top:222px" width="48" height="48" viewBox="0 0 48 48">
<path d="M11 1 L25 1 L31 20 L36 1 L45 1 L35 23 L45 36 L36 39 L30 29 L24 45 L16 46 L26 22 Z" fill="#e41e1e"/>
<path d="M1 18 L14 17 L15 23 L2 21Z" fill="#8090a8"/>
<circle cx="23" cy="19" r="8.5" fill="#d8b060" stroke="#6a5020" stroke-width="1"/>
<circle cx="20" cy="15.5" r="1.6" fill="#3a2a0a"/><circle cx="26" cy="15.5" r="1.6" fill="#3a2a0a"/><circle cx="19" cy="21.5" r="1.6" fill="#3a2a0a"/><circle cx="27" cy="21.5" r="1.6" fill="#3a2a0a"/><circle cx="23" cy="24.5" r="1.6" fill="#3a2a0a"/>
<text x="39.5" y="26" font-family="Liberation Sans" font-size="11" fill="#1a5af0">5</text>
</svg>
<svg class="r" style="left:1139px;top:256px" width="14" height="14" viewBox="0 0 14 14"><rect x="0" y="0" width="14" height="14" fill="#eaf6fc"/><path d="M4.2 2 L11 2 L11 8.8 L8.9 6.7 Q6.2 8.8 6.8 12.6 Q4 11.6 4 8.6 Q4.2 5.6 7 4.8 Z" fill="#1f5596"/></svg>
<div class="lbl" style="left:1125.0px;top:275.3px">ConvertXT...</div>
<div class="lbl" style="left:1125.0px;top:290.3px">5</div>
<svg class="r" style="left:1213px;top:222px" width="48" height="48" viewBox="0 0 48 48">
<defs><linearGradient id="swB" x1="0" y1="0" x2="1" y2="1"><stop offset="0" stop-color="#5ab8f8"/><stop offset="1" stop-color="#1a68c0"/></linearGradient></defs>
<path d="M8 4 L24 4 L42 15 L42 45 L8 45 Z" fill="url(#swB)"/>
<path d="M24 4 L42 15 L30 15Z" fill="#8ad8f8"/>
<path d="M10 17 L42 16 L42 43 L10 42 Z" fill="#101418"/>
<path d="M13 19h3v3h-3zM19 19h3v3h-3zM25 19h3v3h-3zM31 19h3v3h-3zM37 19h3v3h-3zM13 24h3v3h-3zM19 24h3v3h-3zM25 24h3v3h-3zM31 24h3v3h-3z" fill="#e0e0e0"/>
<rect x="15" y="30" width="22" height="9" fill="#9a9a9a"/>
</svg>
<svg class="r" style="left:1214px;top:256px" width="14" height="14" viewBox="0 0 14 14"><rect x="0" y="0" width="14" height="14" fill="#eaf6fc"/><path d="M4.2 2 L11 2 L11 8.8 L8.9 6.7 Q6.2 8.8 6.8 12.6 Q4 11.6 4 8.6 Q4.2 5.6 7 4.8 Z" fill="#1f5596"/></svg>
<div class="lbl" style="left:1200.0px;top:275.3px">Subtitle</div>
<div class="lbl" style="left:1200.0px;top:290.3px">Workshop</div>
<svg class="r" style="left:1138px;top:330px" width="48" height="48" viewBox="0 0 48 48">
<rect x="4.2" y="4.2" width="40.6" height="41.3" fill="#1c4ae6"/>
<rect x="4.2" y="4.2" width="40.6" height="1.2" fill="#6a9af4"/>
<rect x="4.2" y="16" width="40.6" height="1.3" fill="#3a7ae8"/>
<rect x="4.2" y="30.5" width="40.6" height="1.3" fill="#3a7ae8"/>
<text x="15" y="17" font-family="Liberation Sans" font-size="15" font-weight="bold" fill="#1a7aa8" stroke="#1a7aa8" stroke-width="0.9" textLength="18" lengthAdjust="spacingAndGlyphs">My</text>
<text x="5" y="32.5" font-family="Liberation Sans" font-size="18" font-weight="bold" fill="#1a80a8" stroke="#1a80a8" stroke-width="1" textLength="24" lengthAdjust="spacingAndGlyphs">MP</text>
<text x="30.5" y="32" font-family="Liberation Sans" font-size="18" font-weight="bold" fill="#0a08b8" stroke="#0a08b8" stroke-width="1" textLength="12.5" lengthAdjust="spacingAndGlyphs">4</text>
<text x="16.5" y="45" font-family="Liberation Sans" font-size="13" font-weight="bold" fill="#1a7aa8" stroke="#1a7aa8" stroke-width="0.9" textLength="19" lengthAdjust="spacingAndGlyphs">Box</text>
</svg>
<svg class="r" style="left:1139px;top:364px" width="14" height="14" viewBox="0 0 14 14"><rect x="0" y="0" width="14" height="14" fill="#eaf6fc"/><path d="M4.2 2 L11 2 L11 8.8 L8.9 6.7 Q6.2 8.8 6.8 12.6 Q4 11.6 4 8.6 Q4.2 5.6 7 4.8 Z" fill="#1f5596"/></svg>
<div class="lbl" style="left:1125.0px;top:383.3px">My MP4Box</div>
<div class="lbl" style="left:1125.0px;top:398.3px">GUI</div>
<svg class="r" style="left:1213px;top:330px" width="48" height="48" viewBox="0 0 48 48">
<defs><radialGradient id="mkG" cx="0.45" cy="0.4" r="0.6"><stop offset="0" stop-color="#ffffff"/><stop offset="0.7" stop-color="#dcdcdc"/><stop offset="1" stop-color="#a8a8a8"/></radialGradient></defs>
<circle cx="24.2" cy="25" r="23" fill="url(#mkG)" stroke="#1a1a1a" stroke-width="1.6"/>
<path d="M24 25 L12 6 M24 25 L36 44" stroke="#c4c4c4" stroke-width="5" opacity="0.5"/>
<text x="4" y="31.5" font-family="Liberation Sans" font-size="16" font-weight="bold" font-style="italic" fill="#20c020" stroke="#0a3a0a" stroke-width="0.9" textLength="39.5" lengthAdjust="spacingAndGlyphs">MKV</text>
</svg>
<svg class="r" style="left:1214px;top:364px" width="14" height="14" viewBox="0 0 14 14"><rect x="0" y="0" width="14" height="14" fill="#eaf6fc"/><path d="M4.2 2 L11 2 L11 8.8 L8.9 6.7 Q6.2 8.8 6.8 12.6 Q4 11.6 4 8.6 Q4.2 5.6 7 4.8 Z" fill="#1f5596"/></svg>
<div class="lbl" style="left:1200.0px;top:383.3px">MakeMKV</div>
<svg class="r" style="left:1138px;top:438px" width="48" height="48" viewBox="0 0 48 48">
<defs><linearGradient id="bdG" x1="0.8" y1="0" x2="0.3" y2="1"><stop offset="0" stop-color="#c0e4f8"/><stop offset="0.45" stop-color="#4a90e0"/><stop offset="1" stop-color="#0a3ea0"/></linearGradient>
<linearGradient id="bdO" x1="0" y1="0" x2="1" y2="1"><stop offset="0" stop-color="#f89048"/><stop offset="1" stop-color="#e85a10"/></linearGradient></defs>
<circle cx="24" cy="27.5" r="21" fill="url(#bdG)"/>
<circle cx="24" cy="27.5" r="7.2" fill="#fff"/><circle cx="24" cy="27.5" r="3.6" fill="#2a68c0"/>
<path d="M8.4 1.9 L29.9 6.5 L27.9 13.6 Q22 12 20 15 Q19.5 19 26 20 L24.6 26.6 L16.9 25.3 Q17 20 14 19 Q10.5 19 11 22.7 L3.9 22 Z" fill="url(#bdO)"/>
</svg>
<svg class="r" style="left:1139px;top:472px" width="14" height="14" viewBox="0 0 14 14"><rect x="0" y="0" width="14" height="14" fill="#eaf6fc"/><path d="M4.2 2 L11 2 L11 8.8 L8.9 6.7 Q6.2 8.8 6.8 12.6 Q4 11.6 4 8.6 Q4.2 5.6 7 4.8 Z" fill="#1f5596"/></svg>
<div class="lbl" style="left:1125.0px;top:491.3px">BDtoAVCHD</div>
<svg class="r" style="left:1213px;top:438px" width="48" height="48" viewBox="0 0 48 48">
<defs><linearGradient id="xmA" x1="0" y1="0" x2="0" y2="1"><stop offset="0" stop-color="#2828f0"/><stop offset="1" stop-color="#8888f0"/></linearGradient>
<linearGradient id="xmB" x1="0" y1="0" x2="0" y2="1"><stop offset="0" stop-color="#8a80f0"/><stop offset="1" stop-color="#d8d0f8"/></linearGradient></defs>
<rect x="9" y="1" width="30" height="45" fill="#000"/>
<rect x="15" y="7" width="18" height="15" fill="url(#xmA)"/>
<rect x="15" y="25" width="18" height="15" fill="url(#xmB)"/>
<path d="M10 4.5h3v2.6h-3zM10 10.5h3v2.6h-3zM10 16.5h3v2.6h-3zM10 22.5h3v2.6h-3zM10 28.5h3v2.6h-3zM10 34.5h3v2.6h-3zM10 40.5h3v2.6h-3zM35 4.5h3v2.6h-3zM35 10.5h3v2.6h-3zM35 16.5h3v2.6h-3zM35 22.5h3v2.6h-3zM35 28.5h3v2.6h-3zM35 34.5h3v2.6h-3zM35 40.5h3v2.6h-3z" fill="#fff"/>
</svg>
<svg class="r" style="left:1214px;top:472px" width="14" height="14" viewBox="0 0 14 14"><rect x="0" y="0" width="14" height="14" fill="#eaf6fc"/><path d="M4.2 2 L11 2 L11 8.8 L8.9 6.7 Q6.2 8.8 6.8 12.6 Q4 11.6 4 8.6 Q4.2 5.6 7 4.8 Z" fill="#1f5596"/></svg>
<div class="lbl" style="left:1200.0px;top:491.3px">XMedia</div>
<div class="lbl" style="left:1200.0px;top:506.3px">Recode</div>
<svg class="r" style="left:1138px;top:546px" width="48" height="48" viewBox="0 0 48 48">
<defs><radialGradient id="qtG" cx="0.4" cy="0.3" r="0.7"><stop offset="0" stop-color="#8ad0ff"/><stop offset="0.7" stop-color="#3aa0f0"/><stop offset="1" stop-color="#1a70d0"/></radialGradient></defs>
<path d="M38 35 L44 42 L40 45 L34 38Z" fill="#3aa0f0" stroke="#1a60b8" stroke-width="0.8"/>
<circle cx="24" cy="25" r="19.5" fill="url(#qtG)" stroke="#1a60b8" stroke-width="0.8"/>
<circle cx="24" cy="25" r="12.5" fill="#1a6ed0" stroke="#1458b0" stroke-width="0.8"/>
<path d="M23 25.5 L36 14" stroke="#5ab8f8" stroke-width="3.6" stroke-linecap="round"/>
<path d="M34 12 L38 16" stroke="#fff" stroke-width="3"/>
</svg>
<svg class="r" style="left:1139px;top:580px" width="14" height="14" viewBox="0 0 14 14"><rect x="0" y="0" width="14" height="14" fill="#eaf6fc"/><path d="M4.2 2 L11 2 L11 8.8 L8.9 6.7 Q6.2 8.8 6.8 12.6 Q4 11.6 4 8.6 Q4.2 5.6 7 4.8 Z" fill="#1f5596"/></svg>
<div class="lbl" style="left:1125.0px;top:599.3px">QuickTime</div>
<div class="lbl" style="left:1125.0px;top:614.3px">Player</div>
<svg class="r" style="left:1213px;top:546px" width="48" height="48" viewBox="0 0 48 48">
<defs><linearGradient id="msG" x1="0" y1="0" x2="1" y2="1"><stop offset="0" stop-color="#22c8f8"/><stop offset="0.45" stop-color="#0a6a9c"/><stop offset="1" stop-color="#04223a"/></linearGradient></defs>
<rect x="0" y="1" width="48" height="47.5" fill="url(#msG)"/>
<path d="M48 1 L48 20 L20 48 L8 48 Z" fill="#0a5a88" opacity="0.25"/>
<path d="M7.1 14.9 h8.8 v2.6 h16.9 v-2.6 h8.4 v20.8 h-8.4 v-2.6 h-16.9 v2.6 h-8.8 Z M15.9 19.8 v10.7 h16.9 v-10.7 Z" fill="#fff" fill-rule="evenodd"/>
<path d="M10 18.8h3.6v2.6h-3.6zM10 24h3.6v2.6h-3.6zM10 29.2h3.6v2.6h-3.6zM35.4 18.8h3.6v2.6h-3.6zM35.4 24h3.6v2.6h-3.6zM35.4 29.2h3.6v2.6h-3.6z" fill="#0a4a70"/>
</svg>
<svg class="r" style="left:1214px;top:580px" width="14" height="14" viewBox="0 0 14 14"><rect x="0" y="0" width="14" height="14" fill="#eaf6fc"/><path d="M4.2 2 L11 2 L11 8.8 L8.9 6.7 Q6.2 8.8 6.8 12.6 Q4 11.6 4 8.6 Q4.2 5.6 7 4.8 Z" fill="#1f5596"/></svg>
<div class="lbl" style="left:1200.0px;top:599.3px">Movie Studio</div>
<div class="lbl" style="left:1200.0px;top:614.3px">Platinum 1...</div>
<svg class="r" style="left:1138px;top:654px" width="48" height="48" viewBox="0 0 48 48">
<defs><linearGradient id="avY" x1="0" y1="0" x2="1" y2="0"><stop offset="0" stop-color="#ffffc8"/><stop offset="1" stop-color="#f0f020"/></linearGradient>
<linearGradient id="avG" x1="0" y1="0" x2="1" y2="0"><stop offset="0" stop-color="#c8ffc8"/><stop offset="1" stop-color="#20d020"/></linearGradient>
<linearGradient id="avR" x1="0" y1="0" x2="1" y2="0"><stop offset="0" stop-color="#ffb0b0"/><stop offset="1" stop-color="#f04040"/></linearGradient>
<linearGradient id="avB" x1="0" y1="0" x2="1" y2="0"><stop offset="0" stop-color="#8080ff"/><stop offset="1" stop-color="#2020f0"/></linearGradient></defs>
<rect x="6" y="1" width="36" height="47" fill="#0a0a0a"/>
<rect x="14" y="1" width="20" height="6" fill="url(#avR)"/>
<rect x="14" y="8.5" width="20" height="14" fill="url(#avY)"/>
<rect x="14" y="24.5" width="20" height="13.5" fill="url(#avG)"/>
<rect x="14" y="40" width="20" height="8" fill="url(#avB)"/>
<path d="M8.5 3.5h3v3h-3zM8.5 9.5h3v3h-3zM8.5 15.5h3v3h-3zM8.5 21.5h3v3h-3zM8.5 27.5h3v3h-3zM36 3.5h3v3h-3zM36 9.5h3v3h-3zM36 15.5h3v3h-3zM36 21.5h3v3h-3zM36 27.5h3v3h-3zM36 33.5h3v3h-3zM36 39.5h3v3h-3zM36 45h3v3h-3z" fill="#2a78c0"/>
</svg>
<svg class="r" style="left:1139px;top:688px" width="14" height="14" viewBox="0 0 14 14"><rect x="0" y="0" width="14" height="14" fill="#eaf6fc"/><path d="M4.2 2 L11 2 L11 8.8 L8.9 6.7 Q6.2 8.8 6.8 12.6 Q4 11.6 4 8.6 Q4.2 5.6 7 4.8 Z" fill="#1f5596"/></svg>
<div class="lbl" style="left:1125.0px;top:707.3px">AVStoDVD</div>
<svg class="r" style="left:1213px;top:654px" width="48" height="48" viewBox="0 0 48 48">
<defs><linearGradient id="rbG" x1="0" y1="0" x2="1" y2="0"><stop offset="0" stop-color="#8ab4dc" stop-opacity="0.8"/><stop offset="0.45" stop-color="#f0f4f8"/><stop offset="0.8" stop-color="#dde6ee"/><stop offset="1" stop-color="#7aa8d4" stop-opacity="0.8"/></linearGradient>
<linearGradient id="rbS" x1="0" y1="0" x2="0" y2="1"><stop offset="0" stop-color="#c8ccd0"/><stop offset="0.5" stop-color="#f0f0f0"/><stop offset="1" stop-color="#9aa0a8"/></linearGradient></defs>
<path d="M6.5 7 L41.6 7 L35.7 45 L11.6 45 Z" fill="url(#rbG)"/>
<path d="M11 39.6 Q24 42 36.4 39.6 L35.7 45.5 Q24 47.5 11.6 45.5Z" fill="url(#rbS)"/>
<ellipse cx="24" cy="7.2" rx="17.5" ry="3.2" fill="#e8eef4" stroke="#a0a8b0" stroke-width="1"/>
<path d="M9 8 Q24 12.5 39 8" stroke="#5a6068" stroke-width="1.2" fill="none"/>
<path d="M12 5.5 Q16 3 20 5 Q25 2 31 4.5 Q35 3.5 37 6 Q30 9 24 9 Q16 9 12 5.5Z" fill="#fafcfe"/>
<path d="M13.5 20 Q16.5 17.5 20.5 19.5 L21 24.5 L17.5 23 Q15 25 13.5 23.5 Z" fill="#3a68d8"/>
<path d="M18 29.5 Q21.5 26 25.5 28.5 Q26 33 22 35 Q19 34.5 18 31.5 Z" fill="#3a68d8"/>
</svg>
<div class="lbl" style="left:1200.0px;top:707.3px">Recycle Bin</div>
<div class="r" style="left:0px;top:760px;width:1280px;height:40px;background:linear-gradient(#3b82c2,#3577b3);"></div>
<div class="r" style="left:0px;top:760px;width:1280px;height:1px;background:#2f70ae;"></div>
<svg class="r" style="left:12px;top:766px" width="27" height="27" viewBox="0 0 27 27"><path d="M0 4 L11 2.5 L11 12.5 L0 12.5Z M12.5 2.3 L27 0 L27 12.5 L12.5 12.5Z M0 14 L11 14 L11 24.5 L0 23Z M12.5 14 L27 14 L27 27 L12.5 24.8Z" fill="#fff"/></svg>
<svg class="r" style="left:64px;top:763px" width="34" height="32" viewBox="0 0 34 32">
<defs><radialGradient id="ieG" cx="0.45" cy="0.4" r="0.6"><stop offset="0" stop-color="#aef0ff"/><stop offset="0.6" stop-color="#3ab8f0"/><stop offset="1" stop-color="#1a80d0"/></radialGradient></defs>
<path d="M17 5 Q28 5 28 17 L28 19 L12 19 Q13 25 18 25 Q23 25 25 22 L28 24 Q25 30 17 30 Q6 30 6 17.5 Q6 5 17 5Z M12 14 L23 14 Q22 9 17.5 9 Q13 9 12 14Z" fill="url(#ieG)"/>
<path d="M3 30 Q-1 26 8 16 Q20 3 30 2 Q35 2 33 8 L31 11 Q33 5 29 4 Q22 4 10 17 Q3 25 5 29 Q8 30 13 27 L10 30 Q5 32 3 30Z" fill="#f6c820"/></svg>
<svg class="r" style="left:126px;top:765px" width="33" height="30" viewBox="0 0 33 30">
<path d="M6 6 L26 2 L30 20 L10 24Z" fill="#8ac840"/>
<path d="M4 7 L26 5 L28 23 L6 25Z" fill="#f0a050"/>
<path d="M3 9 L28 9 L28 26 L3 26Z" fill="#dceefc" stroke="#6aa0d0" stroke-width="1"/>
<rect x="21" y="11" width="5" height="4" fill="#c84a10"/>
<rect x="7" y="16" width="16" height="6" fill="#fff"/>
<path d="M0 26 Q10 30 18 26 Q26 22 33 25 L30 28 Q22 25 16 29 Q8 32 0 26Z" fill="#f0b040"/></svg>
<svg class="r" style="left:189px;top:763px" width="32" height="32" viewBox="0 0 32 32">
<defs><radialGradient id="ffO" cx="0.5" cy="0.6" r="0.6"><stop offset="0" stop-color="#ffb020"/><stop offset="0.7" stop-color="#f26a20"/><stop offset="1" stop-color="#d03a18"/></radialGradient>
<radialGradient id="ffB" cx="0.5" cy="0.4" r="0.6"><stop offset="0" stop-color="#3a70c8"/><stop offset="1" stop-color="#0a2a70"/></radialGradient></defs>
<circle cx="16" cy="16.5" r="14.5" fill="url(#ffO)"/>
<circle cx="17.5" cy="14" r="10" fill="url(#ffB)"/>
<path d="M4 10 Q6 4 12 3 Q9 7 12 9 Q16 9 18 13 Q18 18 13 19 Q9 20 8 24 Q13 29 20 27 Q27 24 29 17 Q30 28 19 31 Q6 32 2 21 Q1 14 4 10Z" fill="#f07018"/></svg>
<svg class="r" style="left:251px;top:766px" width="33" height="29" viewBox="0 0 33 29">
<path d="M1 3 L13 3 L15 5 L31 5 L31 27 L1 27Z" fill="#e8c060"/>
<rect x="4" y="2" width="8" height="4" fill="#fff"/><rect x="4.5" y="2.5" width="3" height="2" fill="#40b040"/><rect x="14" y="4" width="8" height="4" fill="#fff"/><rect x="15" y="4.5" width="3" height="2" fill="#e04030"/><rect x="22" y="6" width="8" height="4" fill="#fff"/><rect x="23" y="6.5" width="3" height="2" fill="#3080e0"/>
<path d="M0 10 L32 10 L32 28 L0 28Z" fill="#f8e4a0"/>
<path d="M5 28 L5 16 L27 16 L27 28 L22.5 28 L22.5 21 L9.5 21 L9.5 28 Z" fill="#b0dcf4" stroke="#7ab8e0" stroke-width="0.8"/></svg>
<svg class="r" style="left:313px;top:767px" width="28" height="28" viewBox="0 0 28 28">
<path d="M23 2 L23 26 M25.5 2.5 L25.5 26" stroke="#b8e0f8" stroke-width="1.2"/>
<rect x="1" y="2" width="21" height="24" fill="#9cc4e8"/>
<circle cx="12.3" cy="13.5" r="8.8" fill="#f27a16" stroke="#d85a10" stroke-width="0.8"/>
<path d="M9.5 7.8 L18.5 13.5 L9.5 19.2Z" fill="#fff"/></svg>
<svg class="r" style="left:373px;top:763px" width="36" height="33" viewBox="0 0 36 33">
<rect x="5" y="1" width="26" height="21" fill="#d8e0e8" stroke="#9aa8b8" stroke-width="1"/>
<rect x="7" y="3" width="22" height="17" fill="#1a48b0"/>
<path d="M10 6 L26 17" stroke="#fff" stroke-width="1.5" opacity="0.6"/>
<path d="M14 22 L22 22 L24 27 L12 27Z" fill="#c0c8d0"/><ellipse cx="18" cy="29" rx="9" ry="2.5" fill="#d8dee4"/>
<path d="M2 14 Q0 20 10 21 L30 19 Q35 16 33 13 Q36 17 28 21 L10 24 Q-2 22 2 14Z" fill="#f0c020"/></svg>
<svg class="r" style="left:436px;top:764px" width="33" height="32" viewBox="0 0 33 32">
<path d="M14 9 Q2 10 2 19 Q3 27 12 27 Q16 27 16 23 Q16 20 20 21 Q26 22 26 16 Q25 9 14 9Z" fill="#e8eef4" stroke="#b8c4d0" stroke-width="1"/>
<circle cx="8" cy="19" r="2.3" fill="#e03030"/><circle cx="10" cy="13.5" r="2.3" fill="#30b040"/><circle cx="16" cy="12" r="2.3" fill="#f0c020"/><circle cx="21" cy="14.5" r="2" fill="#3080e0"/>
<path d="M31 1 L26 9 L14 31" stroke="#d09040" stroke-width="2.5"/><path d="M28 3 L32 0 L30 6Z" fill="#f0d070"/></svg>
<svg class="r" style="left:498px;top:764px" width="32" height="31" viewBox="0 0 32 31">
<path d="M9 2 L30 2 L30 29 L5 29Z" fill="#d8e4ec"/>
<path d="M8 4 L29 5 L27 30 L2 28Z" fill="#78c0d8"/>
<path d="M10 4 L28 5" stroke="#555" stroke-width="2" stroke-dasharray="1 1.5"/>
<path d="M4 26 L26 8 L27 20 L26 29Z" fill="#a8e0f0" opacity="0.7"/></svg>
<div class="r" style="left:548px;top:760px;width:58px;height:40px;background:#86acd6;border:1px solid #1f4e7c;border-bottom:none;box-shadow:inset 0 0 0 1px #dcefff;box-sizing:border-box;"></div>
<svg class="r" style="left:562px;top:764px" width="32" height="32" viewBox="0 0 32 32">
<defs><linearGradient id="tmg" x1="0" y1="0" x2="1" y2="0"><stop offset="0" stop-color="#22a020"/><stop offset="0.5" stop-color="#40d030"/><stop offset="1" stop-color="#18a018"/></linearGradient></defs>
<rect x="1" y="1" width="30" height="29" rx="3" fill="url(#tmg)"/>
<path d="M5 21 L5 10 Q5 7 10 7 Q14 7 14 11 L14 21 M14 11 Q15 7 19 7 Q24 7 24 11 L24 21" stroke="#fff" stroke-width="3.5" fill="none"/>
<circle cx="23.5" cy="24.5" r="7" fill="#d02828" stroke="#fff" stroke-width="1"/>
<path d="M20.5 21.5 L26.5 27.5 M26.5 21.5 L20.5 27.5" stroke="#fff" stroke-width="2"/></svg>
<svg class="r" style="left:1133px;top:773px" width="16" height="16" viewBox="0 0 16 16"><path d="M1.5 1 L1.5 15" stroke="#fff" stroke-width="1.6"/><path d="M2 2 Q6 0 9 2 Q12 4 15 3 L13 6 L15 9 Q12 10 9 8 Q6 6 2 8Z" fill="#fff"/></svg>
<svg class="r" style="left:1157px;top:773px" width="16" height="16" viewBox="0 0 16 16"><rect x="5.5" y="1.5" width="10" height="8" fill="none" stroke="#fff" stroke-width="1.4"/><path d="M8 14 h5 M10.5 10 v4" stroke="#fff" stroke-width="1.4"/><circle cx="3" cy="3.5" r="2.2" fill="none" stroke="#fff" stroke-width="1.3"/><path d="M3 6 V15" stroke="#fff" stroke-width="1.4"/></svg>
<svg class="r" style="left:1181px;top:773px" width="17" height="16" viewBox="0 0 17 16"><path d="M1 5 L4 5 L8 1 L8 15 L4 11 L1 11Z" fill="#fff"/><path d="M10.5 5 Q12.5 8 10.5 11 M13 3 Q16.5 8 13 13" stroke="#fff" stroke-width="1.3" fill="none"/></svg>
<div class="t" style="left:1188px;width:101px;text-align:center;top:766.5px;font-size:11.5px;line-height:13px;color:#fff;">20:39</div>
<div class="t" style="left:1188px;width:101px;text-align:center;top:783.4px;font-size:11.5px;line-height:13px;color:#fff;">5/26/2014</div>
<div class="r" style="left:533px;top:737px;width:92px;height:66px;box-sizing:border-box;border:3px solid #dc1f2b;border-radius:14px;"></div>
</body></html>
